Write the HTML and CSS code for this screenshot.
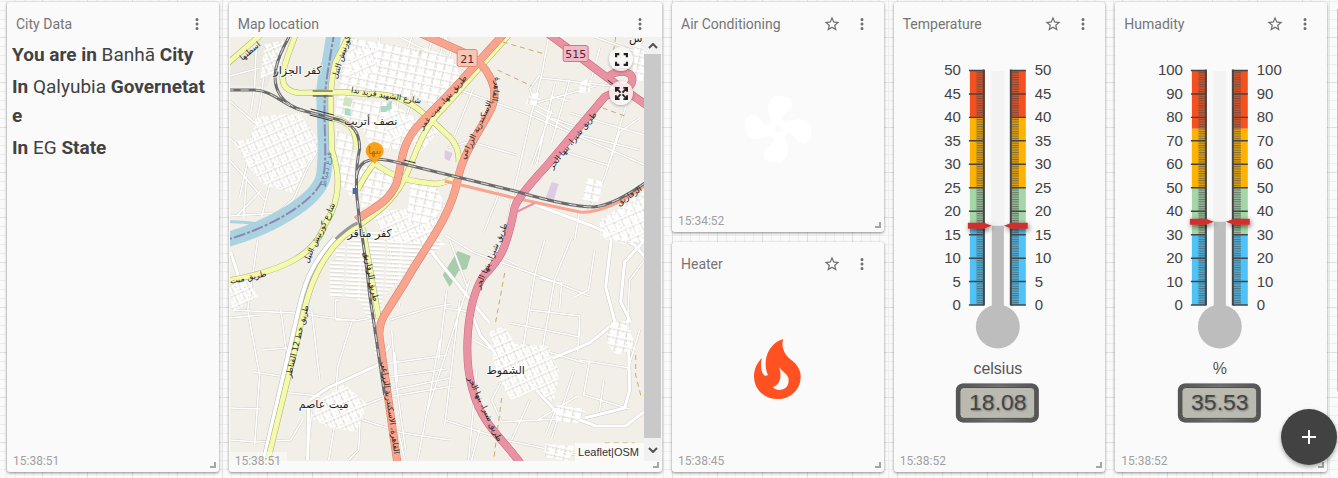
FILE: index.html
```html
<!DOCTYPE html>
<html lang="en">
<head>
<meta charset="utf-8">
<meta name="viewport" content="width=device-width, initial-scale=1">
<title>Dashboard</title>
<link rel="stylesheet" href="styles.css">
</head>
<body>
<svg class="sprite" aria-hidden="true">
  <defs>
    <symbol id="dots" viewBox="0 0 24 24"><path d="M12 8a2 2 0 1 0 0-4 2 2 0 0 0 0 4zm0 2a2 2 0 1 0 0 4 2 2 0 0 0 0-4zm0 6a2 2 0 1 0 0 4 2 2 0 0 0 0-4z"/></symbol>
    <symbol id="star" viewBox="0 0 24 24"><path d="M22 9.24l-7.19-.62L12 2 9.19 8.63 2 9.24l5.46 4.73L5.82 21 12 17.27 18.18 21l-1.63-7.03L22 9.24zM12 15.4l-3.76 2.27 1-4.28-3.32-2.88 4.38-.38L12 6.1l1.71 4.04 4.38.38-3.32 2.88 1 4.28L12 15.4z"/></symbol>
    <pattern id="minor" width="20" height="2.35" y="70" patternUnits="userSpaceOnUse"><rect width="20" height="1" fill="#444" fill-opacity=".55"/></pattern>
    <filter id="soft" x="-50%" y="-100%" width="200%" height="300%"><feDropShadow dx="1" dy="2" stdDeviation="2.5" flood-opacity=".55"/></filter>
    <linearGradient id="frame" x1="0" x2="1" y1="0" y2="0"><stop offset="0" stop-color="#555"/><stop offset=".5" stop-color="#8a8a8a"/><stop offset="1" stop-color="#555"/></linearGradient>
    <g id="ticks">
      <rect x="976" y="70" width="8" height="235" fill="#555" fill-opacity=".22"/><rect x="1011" y="70" width="8" height="235" fill="#555" fill-opacity=".22"/>
      <rect x="977" y="70" width="7" height="235" fill="url(#minor)"/><rect x="1012" y="70" width="7" height="235" fill="url(#minor)"/>
      <path d="M984 69.500V306M1011 69.500V306" stroke="#444" stroke-width="2"/>
      <path d="M969 70.500h15M969 94h15M969 117.500h15M969 141h15M969 164.500h15M969 188h15M969 211.500h15M969 235h15M969 258.500h15M969 282h15M969 305.500h15M1011 70.500h15M1011 94h15M1011 117.500h15M1011 141h15M1011 164.500h15M1011 188h15M1011 211.500h15M1011 235h15M1011 258.500h15M1011 282h15M1011 305.500h15" stroke="#444" stroke-width="1.500"/>
      <rect x="991.500" y="71" width="13" height="240" fill="#f3f3f3"/>
      <circle cx="998" cy="327" r="22" fill="#bdbdbd"/>
      <rect x="956" y="384" width="83" height="39" rx="7" fill="url(#frame)"/>
      <rect x="957.500" y="385.500" width="80" height="36" rx="6" fill="none" stroke="#555" stroke-opacity=".6" stroke-width="3"/>
      <rect x="960" y="388" width="75" height="31" rx="4" fill="#babab1" stroke="#4b4b4b"/>
    </g>
    <g id="needles" filter="url(#soft)" fill="#d32f2f"><path d="M968-3h16l8 3-8 3h-16zM1028-3h-16l-8 3 8 3h16z"/></g>
  </defs>
</svg>

<main class="dashboard">
  <article class="card tall">
    <header class="card-head"><h2>City Data</h2><button aria-label="Menu"><svg><use href="#dots"/></svg></button></header>
    <div class="city">
      <p><b>You are in</b> Banhā <b>City</b></p>
      <p><b>In</b> Qalyubia <b>Governetate</b></p>
      <p><b>In</b> EG <b>State</b></p>
    </div>
    <time>15:38:51</time><i class="grip"></i>
  </article>

  <article class="card tall wide">
    <header class="card-head"><h2>Map location</h2><button aria-label="Menu"><svg><use href="#dots"/></svg></button></header>
    <div class="map-body">
      <div class="map">
        <svg class="tiles" viewBox="230 37 415 424" preserveAspectRatio="xMidYMid slice">
          <defs>
            <pattern id="townA" width="9" height="8" patternUnits="userSpaceOnUse" patternTransform="rotate(12)"><path d="M0 1h9M0 5h7M2 0v8M6 1v7M4 5v3" stroke="#fff" stroke-width="1.900" fill="none"/><path d="M0 2.400h9M7.400 1v7" stroke="#d4d1cb" stroke-width=".5"/></pattern>
            <pattern id="townB" width="8" height="11" patternUnits="userSpaceOnUse" patternTransform="rotate(-24)"><path d="M0 1h8M3 5h5M1 0v11M5 1v9M0 8h6" stroke="#fff" stroke-width="1.900" fill="none"/><path d="M0 2.400h8M6.400 1v9" stroke="#d4d1cb" stroke-width=".5"/></pattern>
            <pattern id="lanes" width="40" height="4" patternUnits="userSpaceOnUse" patternTransform="rotate(3)"><path d="M0 1h38M14 1v3" stroke="#fff" stroke-width="2"/><path d="M0 2.500h38" stroke="#cfccc6" stroke-width=".5"/></pattern>
            <g id="streets">
              <path d="M257 37l-2 50-4 26M230 76l30-8M230 138l26 25 28 26M230 101l30 26 60 20M268 47l-8 60-20 90M320 147l-12 20-14 32-16 14-48 3M230 160l35 40M247 176l-3 41M262 190l-25 26M276 160l-14 57M300 110l-22 60"/>
              <path d="M380 37l-7 55M400 37l70 35M412 37l-26 80M432 42l-30 88M452 50l-22 70M380 62l60 30M345 60l70 20M345 80l50 8M400 92l-10 60M445 37l-12 50M345 37l60 22"/>
              <path d="M549 37l-7 38-10 38-20 88-12 64M445 85l80 28 70 30 55 24M542 78l70 8M540 75l-10 14 6 14 60-17M570 80l-18 62M555 84l-18 80M535 110l45 25 60 15M595 37l45 16M600 48l-8 30M628 100l-22 74-18 40M645 135l-75-22M558 150l52 16M475 140l-27 8M473 90l-22 55M475 143l42 12M552 110l-20 55M508 200l-15-10M580 210l-5 30M500 192l-16 40M640 118l-20 14-10 30M445 37l24 30"/>
              <path d="M445 235l30 18 70 25 45 18M545 240l-10 35-12 75M572 237l-17 42-14 80M517 265l-30-15M530 310l50 6v20M562 282l-2 26M540 278l23 6M510 323l70 14M525 345l60 18M580 318l-2 35M595 250l-6 40-16 8M470 280l-42 130M450 240l18 48M445 308l26 4M470 338l45 24M510 365l-18 35 10 22 75-4M477 370l-8 90M460 300l-15 125M445 420l60 20 95 20M480 430l-8 30M530 400l-18 40M590 360l-6 35 46 14M580 360l50 8M604 380l-4 30M645 260l-15 20-2 40M538 420l40-24M556 410l-10 24M640 330l-12 40M574 372l-22 66"/>
              <path d="M230 310l65 3 60 8 27-5M230 318l30-3M258 240l-10 70 12 65-5 70M281 309l6 45M262 350l26-2M312 310l8 70M352 322l-14 45-2 30M340 300h-4v20h20M390 320l40-12 22-4M432 250l14 20M447 290l-8 70M400 307l-10-60M392 330l4 50 10 70M395 352l3 30M378 365l70-10M382 378l65-9M384 392l66-14M363 406l20-8 70-12M230 408l31 1M230 440l28 2 33-2 12-20M312 412l-5 48M361 410l-2 40-10 10M335 425l-6 35M363 420l40 13 47 7M440 340l-16 90-6 30M399 433l6 27M280 392l40 4M254 372l38 6"/>
              <path d="M356 38l-4 27M364 40l-4 25M373 42l-4 30M418 50l-10 30M425 54l-8 28M550 96l20 5M552 118l22 8M534 104l20 10"/>
            </g>
            <g id="lanesMain">
              <path d="M310 400l18-12 50-23 12-20"/><path d="M309 405l-1 55"/><path d="M612 237l-6 50 10 38M645 257l-10-12-45-20-80-30"/><path d="M644 412l-18 14-30 0-40-15-25-27-25-20-25-28-10-25"/><path d="M510 360l20 8 60-25 27-22M628 320l2 70-5 18-40 10"/><path d="M430 250l45 55 15 18"/><path d="M645 240l-20 22-4 40 10 20"/><path d="M231 252l8 25M230 282l20 10"/>
            </g>
            <path id="river" d="M335 30C331 55 326 80 325 100C324 130 328 160 323 179C315 202 270 228 226 240"/>
            <path id="ylw1" d="M226 65L262 34"/>
            <path id="ylw2" d="M296 34C290 52 285 60 283 76Q282 91 300 93L340 92L385 95C410 98 424 113 450 137Q460 148 459 162"/>
            <path id="ylw3" d="M350 34L336 62C328 90 332 115 332 150C343 180 338 205 325 225C316 252 290 270 226 281"/>
            <path id="ylw4" d="M332 118C350 121 358 130 356 150M358 190Q365 175 375 163Q395 180 428 183Q445 186 455 176"/>
            <path id="ylw5" d="M510 34L445 107C420 130 415 160 404 180C390 210 355 226 342 238C315 265 307 295 298 338L267 465"/>
            <path id="ylw6" d="M363 228L379 318"/>
            <path id="org1" d="M418 32L465 53C490 65 500 90 492 108C480 132 463 153 458 180C450 220 423 250 405 283L388 310Q378 324 380 338L398 465"/>
            <path id="org2" d="M504 34L455 88L420 124C400 145 403 163 397 183C388 205 370 209 357 220"/>
            <path id="org3" d="M445 181L515 198L580 212Q606 214 645 186"/>
            <path id="pnk1" d="M549 34L568 48L608 78L648 106M608 78C615 68 637 70 632 83C627 94 608 92 604 98L545 168Q519 196 515 207C507 250 500 260 483 277C466 305 464 360 473 390C482 425 503 438 522 465"/>
            <g id="rail"><path d="M226 90H254C275 90 285 108 305 111L332 118C355 122 360 134 360 149Q356 165 357 195L360 222Q366 255 370 295L385 395"/><path d="M291 34C276 60 270 80 281 96Q288 106 305 111M357 175C360 158 375 156 400 163L515 191Q570 207 594 207Q615 205 648 181"/></g>
          </defs>
          <rect x="230" y="37" width="415" height="424" fill="#f2efe9"/>
          <path d="M265 37h22l-20 50-37-2V62z" fill="#ece9e3"/>
          <path d="M458 251l13 5-4 13-8 2-9 16-7-12z" fill="#a8cdae"/>
          <path d="M552 182l7 2-5 16-8-2zM445 150l8 3-3 8-5-2z" fill="#dccbe2"/>
          <path d="M415 47l8 4-4 6-7-3z" fill="#cfe4c0"/>
          <use href="#streets" class="casing thin"/><use href="#lanesMain" class="casing mid"/>
          <use href="#streets" class="white thin"/><use href="#lanesMain" class="white mid"/>
          <path d="M256 117l44-4 22 32-16 22-12 26-30-8-18-22zM234 142l20-4 10 22-14 8zM265 44l24-4-11 30-18 12z" fill="url(#townB)"/>
          <path d="M340 72l15-33 66 10-10 48-42-4-30 6zM338 99l54 4 28 18-22 28-26-2-12-24-25-7zM336 128l20 12-2 60-16-20zM360 170l16-8 18 16-8 18-24 12zM425 48l28 10 8 20-30 28-22-16z" fill="url(#townA)"/>
          <path d="M350 50l30-8-4 30-30 6zM392 108l22 14-20 22-14-24zM410 130l20-16 10 16-22 26z" fill="url(#townB)"/>
          <path d="M336 250l30-18 58-4 22 16-30 20-32 32-8 40-16-36-30-4 8-26zM330 262l36-14 4 40-40 8zM374 305l14 2-7 46-6 2z" fill="url(#lanes)"/>
          <path d="M371 212l52-5 20 12-12 26-46-4zM322 398l23-14 22 20-10 28-26-4-20-10zM230 282l18-3 10 18-26 16zM490 332l14-6 12 18 32 2 12 26-6 30-20-12-22 10-16-24z" fill="url(#townB)"/>
          <path d="M600 220l45-28v48l-20 4-24-8zM610 323l18-2 8 28-20 6-10-14zM556 405l30 4-8 14-22-2zM545 444l30 2-6 15-24-4zM588 178l16 4-6 22-16-3zM580 82l12-4-2 14-12 2zM530 94l12-2-4 14-12-2zM634 44l11-4v40l-12 4zM410 182l26 4 10 20-24 22-14-10z" fill="url(#townA)"/>
          <path d="M600 222l45-26v46l-40-2zM494 340l14-4 14 18 26 4 4 16-24-2-18 12-14-12zM322 402l20-12 18 14-8 20-26-4z" fill="url(#townB)"/>
          <path d="M345 97l8 2-2 8-8-2z" fill="#cfe4c0"/><path d="M345 108l6 1v7l-6-1zM381 106h6v6h-6zM387 104l5-4v9l-5 2z" fill="#acd8c5"/>
          <use href="#river" class="water"/><path d="M226 222C240 221 252 223 266 225M333 45C320 60 315 90 320 120" class="brook"/>
          <use href="#river" class="border"/>
          <path d="M335 238C310 265 304 285 297 318L263 465" stroke="#bbb" stroke-width="5"/><path d="M335 238C310 265 304 285 297 318L263 465" stroke="#fff" stroke-width="4"/>
          <path d="M339 239C313 266 306 290 300 323L266 465" stroke="#8cabb0" stroke-width="2"/>
          <g class="casing y"><use href="#ylw1"/><use href="#ylw2"/><use href="#ylw3"/><use href="#ylw4"/><use href="#ylw5"/><use href="#ylw6"/></g>
          <g class="yellow"><use href="#ylw1"/><use href="#ylw2"/><use href="#ylw3"/><use href="#ylw4"/><use href="#ylw5"/><use href="#ylw6"/></g>
          <path d="M358 223Q350 226 336 239" stroke="#999" stroke-width="3"/>
          <g class="orange-edge"><use href="#org1"/><use href="#org2"/></g>
          <g class="orange"><use href="#org1"/><use href="#org2"/></g>
          <use href="#org3" class="orange slim"/>
          <use href="#pnk1" class="pink-edge"/><use href="#pnk1" class="pink"/><path d="M517 212l18-9" stroke="#e892a2" stroke-width="2"/>
          <use href="#rail" class="rail"/><use href="#rail" class="rail-dash"/>
          <path d="M313 91h20M313 96h20M311 109l23 6M310 115l23 6M404 160l12 3M608 80l10 8" stroke="#333" stroke-width="1"/>
          <path d="M505 273l-9 49M502 398l-8 62M503 42l42 12M498 70l34 16M603 108l22 8M616 37l-3 20M605 443h30M636 355v20l6 24" class="track"/>
          <rect x="353" y="188" width="5" height="6" fill="#4d6aa0"/>

          <g class="place">
            <text x="298" y="74">كفر الجزار</text><text x="371" y="125">نصف أتريب</text><text x="370" y="237">كفر مناقر</text><text x="324" y="408">ميت عاصم</text><text x="506" y="374">الشموط</text><text x="636" y="42">س</text>
          </g>
          <g class="road">
            <text transform="translate(252 53) rotate(-40)">اسطنها</text>
            <text transform="translate(344 58) rotate(-72)">كورنيش النيل</text>
            <text transform="translate(386 98) rotate(9)">شارع الشهيد فريد ندا</text>
            <text transform="translate(445 104) rotate(-49)">طريق بنها، ميت غمر</text>
            <text transform="translate(494 90) rotate(98)">القاهرة،</text>
            <text transform="translate(479 131) rotate(-64)">الاسكندرية الزراعي</text>
            <text transform="translate(575 142) rotate(-51)">طريق شبرا، بنها الحر</text>
            <text transform="translate(631 198) rotate(-33)">الزقازيق</text>
            <text transform="translate(322 234) rotate(-65)">شارع كورنيش النيل</text>
            <text transform="translate(249 280) rotate(-12)">طريق ميت</text>
            <text transform="translate(369 277) rotate(79)">طريق الزقازيق</text>
            <text transform="translate(300 342) rotate(-76)">طريق خط 12 القناطر</text>
            <text transform="translate(494 257) rotate(-67)">طريق شبرا، بنها الحر</text>
            <text transform="translate(483 410) rotate(65)">طريق شبرا، بنها الحر</text>
            <text transform="translate(388 408) rotate(82)">القاهرة، الاسكندرية الزراعي</text>
            <text transform="translate(329 170) rotate(-80)" fill="#6686ad">فرع دمياط</text>
          </g>
          <g class="shield"><rect x="457.500" y="49.500" width="20" height="17" rx="2" fill="#f7c6b6" stroke="#df8c70"/><text x="467.500" y="63">21</text><rect x="563.500" y="45.500" width="25" height="16" rx="2" fill="#efb9c6" stroke="#d0758c"/><text x="576" y="58">515</text></g>
          <path d="M375 142a9 9 0 0 1 9 9c0 5-5 7-9 13-4-6-9-8-9-13a9 9 0 0 1 9-9z" fill="#fba01b"/>
          <text x="375" y="154" class="pin">بنها</text>
        </svg>
        <div class="map-tools">
          <button aria-label="Fullscreen"><svg viewBox="0 0 12 12"><path d="M1 4V1h3M8 1h3v3M11 8v3H8M4 11H1V8"/></svg></button>
          <button aria-label="Fit bounds"><svg viewBox="0 0 14 14"><path d="M1 5V1h4M1 1l5 5M9 1h4v4M13 1L8 6M13 9v4H9M13 13L8 8M5 13H1V9M1 13l5-5"/></svg></button>
        </div>
        <div class="credit"><a href="#leaflet">Leaflet</a>|<a href="#osm">OSM</a></div>
      </div>
      <div class="scroll"><span><svg viewBox="0 0 10 6"><path d="M1 5l4-4 4 4"/></svg></span><span class="down"><svg viewBox="0 0 10 6"><path d="M1 1l4 4 4-4"/></svg></span></div>
    </div>
    <time>15:38:51</time><i class="grip"></i>
  </article>

  <article class="card">
    <header class="card-head"><h2>Air Conditioning</h2><button aria-label="Favourite"><svg><use href="#star"/></svg></button><button aria-label="Menu"><svg><use href="#dots"/></svg></button></header>
    <div class="state"><svg class="fan" viewBox="0 0 24 24"><path fill="#fff" d="M12,11A1,1 0 0,0 11,12A1,1 0 0,0 12,13A1,1 0 0,0 13,12A1,1 0 0,0 12,11M12.500,2C17,2 17.110,5.570 14.750,6.750C13.760,7.240 13.320,8.290 13.130,9.220C13.610,9.420 14.030,9.730 14.350,10.130C18.050,8.130 22.030,8.920 22.030,12.500C22.030,17 18.460,17.100 17.280,14.730C16.780,13.740 15.720,13.300 14.790,13.110C14.590,13.590 14.280,14 13.880,14.340C15.870,18.030 15.080,22 11.500,22C7,22 6.910,18.420 9.270,17.240C10.250,16.750 10.690,15.710 10.890,14.790C10.400,14.590 9.970,14.270 9.650,13.870C5.960,15.850 2,15.070 2,11.500C2,7 5.560,6.890 6.740,9.260C7.240,10.250 8.290,10.680 9.220,10.870C9.410,10.390 9.730,9.970 10.140,9.650C8.150,5.960 8.940,2 12.500,2Z"/></svg></div>
    <time>15:34:52</time><i class="grip"></i>
  </article>

  <article class="card tall">
    <header class="card-head"><h2>Temperature</h2><button aria-label="Favourite"><svg><use href="#star"/></svg></button><button aria-label="Menu"><svg><use href="#dots"/></svg></button></header>
    <svg class="gauge" viewBox="894 37 212 424">
      <path d="M970 70h15v47.500h-15zM1011 70h15v47.500h-15z" fill="#f4511e"/><path d="M970 117.500h15V188h-15zM1011 117.500h15V188h-15z" fill="#ffb300"/><path d="M970 188h15v38h-15zM1011 188h15v38h-15z" fill="#a5d6a7"/><path d="M970 226h15v79.500h-15zM1011 226h15v79.500h-15z" fill="#4fc3f7"/>
      <use href="#ticks"/><path d="M992 226h12v84h-12z" fill="#bdbdbd"/><use href="#needles" y="226"/>
      <g class="left"><text x="961" y="75">50</text><text x="961" y="99">45</text><text x="961" y="122">40</text><text x="961" y="146">35</text><text x="961" y="169">30</text><text x="961" y="193">25</text><text x="961" y="216">20</text><text x="961" y="240">15</text><text x="961" y="263">10</text><text x="961" y="287">5</text><text x="961" y="310">0</text></g>
      <g><text x="1035" y="75">50</text><text x="1035" y="99">45</text><text x="1035" y="122">40</text><text x="1035" y="146">35</text><text x="1035" y="169">30</text><text x="1035" y="193">25</text><text x="1035" y="216">20</text><text x="1035" y="240">15</text><text x="1035" y="263">10</text><text x="1035" y="287">5</text><text x="1035" y="310">0</text></g>
      <text x="998" y="375" class="unit">celsius</text><text x="998" y="411" class="value">18.08</text>
    </svg>
    <time>15:38:52</time><i class="grip"></i>
  </article>

  <article class="card tall">
    <header class="card-head"><h2>Humadity</h2><button aria-label="Favourite"><svg><use href="#star"/></svg></button><button aria-label="Menu"><svg><use href="#dots"/></svg></button></header>
    <svg class="gauge" viewBox="893 37 212 424">
      <path d="M970 70h15v59h-15zM1011 70h15v59h-15z" fill="#f4511e"/><path d="M970 129h15v59h-15zM1011 129h15v59h-15z" fill="#ffb300"/><path d="M970 188h15v47h-15zM1011 188h15v47h-15z" fill="#a5d6a7"/><path d="M970 235h15v70.500h-15zM1011 235h15v70.500h-15z" fill="#4fc3f7"/>
      <use href="#ticks"/><path d="M992 222h12v88h-12z" fill="#bdbdbd"/><use href="#needles" y="222"/>
      <g class="left"><text x="961" y="75">100</text><text x="961" y="99">90</text><text x="961" y="122">80</text><text x="961" y="146">70</text><text x="961" y="169">60</text><text x="961" y="193">50</text><text x="961" y="216">40</text><text x="961" y="240">30</text><text x="961" y="263">20</text><text x="961" y="287">10</text><text x="961" y="310">0</text></g>
      <g><text x="1035" y="75">100</text><text x="1035" y="99">90</text><text x="1035" y="122">80</text><text x="1035" y="146">70</text><text x="1035" y="169">60</text><text x="1035" y="193">50</text><text x="1035" y="216">40</text><text x="1035" y="240">30</text><text x="1035" y="263">20</text><text x="1035" y="287">10</text><text x="1035" y="310">0</text></g>
      <text x="998" y="375" class="unit">%</text><text x="998" y="411" class="value">35.53</text>
    </svg>
    <time>15:38:52</time><i class="grip"></i>
  </article>

  <article class="card">
    <header class="card-head"><h2>Heater</h2><button aria-label="Favourite"><svg><use href="#star"/></svg></button><button aria-label="Menu"><svg><use href="#dots"/></svg></button></header>
    <div class="state"><svg class="flame" viewBox="269 303 141 180"><path fill="#ff5122" fill-rule="evenodd" d="M357 303C350 322 357 347 378 364C400 380 409 397 409 416C409 455 378 483 340 483C300 483 269 455 269 414C269 392 280 372 293 360C286 385 291 407 303 414L311 411C303 395 301 370 309 348C318 325 336 309 357 303ZM343 384C350 400 350 420 345 430C340 440 333 446 325 447C332 456 345 458 356 454C370 448 375 435 372 420C368 405 350 400 343 384Z"/></svg></div>
    <time>15:38:45</time><i class="grip"></i>
  </article>
</main>
<div class="page-scroll"></div>
<button class="fab" aria-label="Add widget"><svg viewBox="0 0 24 24"><path d="M19 13h-6v6h-2v-6H5v-2h6V5h2v6h6z" fill="#fff"/></svg></button>
</body>
</html>
```

FILE: styles.css
```css
* { box-sizing: border-box; }

body {
  margin: 0;
  font-family: Roboto, sans-serif;
  color: #424242;
  background-color: #fafafa;
  background-image:
    linear-gradient(#e0e0e0 1px, transparent 1px),
    linear-gradient(90deg, #e0e0e0 1px, transparent 1px),
    linear-gradient(#eeeeee 1px, transparent 1px),
    linear-gradient(90deg, #eeeeee 1px, transparent 1px);
  background-size: 45px 45px, 45px 45px, 9px 9px, 9px 9px;
  background-position: 0 37px, 42px 0, 0 1px, 6px 0;
}

.sprite { position: absolute; width: 0; height: 0; }

button {
  padding: 0;
  border: 0;
  background: none;
  cursor: pointer;
}

.dashboard {
  display: grid;
  grid-template-columns: repeat(6, minmax(0, 1fr));
  grid-auto-rows: 230px;
  gap: 10px;
  padding: 2px 11px 6px 7px;
}

.card {
  position: relative;
  display: flex;
  flex-direction: column;
  overflow: hidden;
  border-radius: 3px;
  background: #fafafa;
  box-shadow: 0 1px 3px rgba(0, 0, 0, .45);
}
.tall { grid-row: span 2; }
.wide { grid-column: span 2; }

.card-head {
  display: flex;
  flex: none;
  align-items: center;
  gap: 12px;
  height: 35px;
  padding: 8px 13px 0 9px;
}
.card-head h2 {
  flex: 1;
  margin: 0;
  font-size: 14px;
  font-weight: 400;
  line-height: 20px;
  color: #757575;
  white-space: nowrap;
}
.card-head button, .card-head svg {
  display: block;
  width: 18px;
  height: 18px;
  fill: #6c6c6c;
}

.card > time {
  position: absolute;
  left: 0;
  bottom: 0;
  padding: 2px 6px 4px;
  font-size: 12px;
  line-height: 14px;
  color: #a0a0a0;
  background: rgba(250, 250, 250, .6);
}
.grip {
  position: absolute;
  right: 3px;
  bottom: 4px;
  width: 6px;
  height: 6px;
  border: solid #a6a6a6;
  border-width: 0 2px 2px 0;
}

.city {
  padding: 3px 10px 0 5px;
  font-size: 19px;
  line-height: 29px;
  word-break: break-all;
}
.city p { margin: 0 0 3px; }
.city b { font-weight: 700; }

.state {
  display: flex;
  flex: 1;
  align-items: center;
  justify-content: center;
  padding-bottom: 11px;
}
.fan { width: 80px; height: 80px; }
.flame { width: 47px; height: 60px; }

.gauge {
  display: block;
  width: 100%;
  font: 15px "Liberation Sans", Arial, sans-serif;
  fill: #424242;
}
.gauge .left { text-anchor: end; }
.gauge .unit { font-size: 16px; text-anchor: middle; fill: #555; }
.gauge .value {
  font-size: 23px;
  text-anchor: middle;
  fill: #444;
  text-shadow: 1px 1px 2px rgba(0, 0, 0, .35);
}

.map-body {
  display: flex;
  flex: 1;
  min-height: 0;
  margin: 0 1px 11px;
}
.map { position: relative; flex: 1; min-width: 0; overflow: hidden; }
.tiles { display: block; width: 100%; height: 100%; fill: none; }
.tiles text {
  font-family: "DejaVu Sans", sans-serif;
  text-anchor: middle;
}
.place text { font-size: 11px; fill: #222; stroke: #fff; stroke-width: 2px; stroke-opacity: .6; paint-order: stroke; }
.road { fill: #222; }
.road text { font-size: 8px; }
.shield text { font-size: 11px; fill: #5c2230; }
.tiles .pin { font-size: 10px; fill: #a86d12; }

.casing { stroke: #d0cdc7; }
.white { stroke: #fff; }
.casing.thin { stroke-width: 2.5px; }
.white.thin { stroke-width: 1.6px; }
.casing.mid { stroke-width: 4px; }
.white.mid { stroke-width: 3px; }
.casing.y { stroke: #a9ad6c; stroke-width: 6px; }
.yellow { stroke: #f4f9ad; stroke-width: 5px; }
.water { stroke: #aad3df; stroke-width: 15px; }
.brook { stroke: #aad3df; stroke-width: 3px; }
.border { stroke: #8f86b5; stroke-width: 2px; stroke-dasharray: 12 2 3 2; }
.orange-edge { stroke: #d08066; stroke-width: 8px; }
.orange { stroke: #f9a48e; stroke-width: 7px; }
.orange.slim { stroke-width: 3px; }
.pink-edge { stroke: #c96580; stroke-width: 8px; }
.pink { stroke: #e892a2; stroke-width: 7px; }
.rail { stroke: #6b6b6b; stroke-width: 3px; }
.rail-dash { stroke: #ddd; stroke-width: 1px; stroke-dasharray: 8 7; }
.track { stroke: #cba968; stroke-width: 1px; stroke-dasharray: 5 4; }

.map-tools {
  position: absolute;
  top: 10px;
  right: 11px;
  display: flex;
  flex-direction: column;
  gap: 10px;
}
.map-tools button {
  display: grid;
  place-items: center;
  width: 24px;
  height: 24px;
  border-radius: 50%;
  background: rgba(250, 250, 250, .8);
  box-shadow: 0 1px 3px rgba(0, 0, 0, .3);
}
.map-tools svg { width: 13px; height: 13px; fill: none; stroke: #222; stroke-width: 2px; }

.credit {
  position: absolute;
  right: 0;
  bottom: 0;
  padding: 0 5px 0 3px;
  font: 11px/18px "Liberation Sans", Arial, sans-serif;
  color: #333;
  background: rgba(255, 255, 255, .7);
}
.credit a { color: inherit; text-decoration: none; }

.scroll {
  display: flex;
  flex-direction: column;
  justify-content: space-between;
  width: 17px;
  background: #c9c9c9;
}
.scroll span { display: grid; place-items: center; height: 17px; background: #f1f1f1; }
.scroll .down { height: 23px; }
.scroll svg { width: 10px; height: 6px; fill: none; stroke: #505050; stroke-width: 2px; }

.page-scroll {
  position: fixed;
  top: 9px;
  right: 0;
  width: 1px;
  height: 80%;
  background: #c1c1c1;
}

.fab {
  position: fixed;
  right: 1px;
  bottom: 13px;
  display: grid;
  place-items: center;
  width: 56px;
  height: 56px;
  border-radius: 50%;
  background: #424242;
  box-shadow: 0 2px 4px rgba(0, 0, 0, .35);
}
.fab svg { width: 24px; height: 24px; }
```
